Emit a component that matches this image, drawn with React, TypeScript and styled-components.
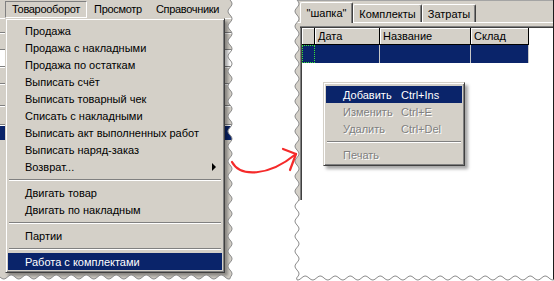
import React from 'react';
import styled, { createGlobalStyle } from 'styled-components';

const GRAY = '#d4d0c8';
const NAVY = '#0a246a';
const DARK = '#808080';
const DARKER = '#404040';
const EDGE = '#8c8c8c';
const FONT = '"Liberation Sans", Arial, sans-serif';

// torn paper edges (Snagit style)
const TAU = Math.PI * 2;
const wave = (t: number, base: number) => base + 2 * Math.sin((t * TAU) / 15);

const LEFT_W = 236;
const LEFT_TEAR_X = 230;
const LEFT_TEAR_Y = 277;

const RIGHT_W = 260;
const RIGHT_TEAR_X = 3;
const RIGHT_TEAR_Y = 278;

const leftTear: string[] = [];
for (let y = 0; y <= LEFT_TEAR_Y; y++) leftTear.push(`${wave(y, LEFT_TEAR_X).toFixed(2)},${y}`);
for (let x = LEFT_TEAR_X; x >= 0; x--) leftTear.push(`${x},${wave(x, LEFT_TEAR_Y).toFixed(2)}`);

const rightTear: string[] = [];
for (let x = RIGHT_W; x >= RIGHT_TEAR_X; x--) rightTear.push(`${x},${wave(x, RIGHT_TEAR_Y).toFixed(2)}`);
for (let y = RIGHT_TEAR_Y; y >= 0; y--) rightTear.push(`${wave(y, RIGHT_TEAR_X).toFixed(2)},${y}`);

const LEFT_CLIP = `M0,0 L${leftTear.join(' L')} Z`;
const RIGHT_CLIP = `M${RIGHT_TEAR_X},0 L${RIGHT_W},0 L${rightTear.join(' L')} Z`;

type MenuEntry =
  | { kind: 'item'; label: string; shortcut?: string; active?: boolean; disabled?: boolean; sub?: boolean }
  | { kind: 'sep' };

const salesMenu: MenuEntry[] = [
  { kind: 'item', label: 'Продажа' },
  { kind: 'item', label: 'Продажа с накладными' },
  { kind: 'item', label: 'Продажа по остаткам' },
  { kind: 'item', label: 'Выписать счёт' },
  { kind: 'item', label: 'Выписать товарный чек' },
  { kind: 'item', label: 'Списать с накладными' },
  { kind: 'item', label: 'Выписать акт выполненных работ' },
  { kind: 'item', label: 'Выписать наряд-заказ' },
  { kind: 'item', label: 'Возврат...', sub: true },
  { kind: 'sep' },
  { kind: 'item', label: 'Двигать товар' },
  { kind: 'item', label: 'Двигать по накладным' },
  { kind: 'sep' },
  { kind: 'item', label: 'Партии' },
  { kind: 'sep' },
  { kind: 'item', label: 'Работа с комплектами', active: true },
];

const gridMenu: MenuEntry[] = [
  { kind: 'item', label: 'Добавить', shortcut: 'Ctrl+Ins', active: true },
  { kind: 'item', label: 'Изменить', shortcut: 'Ctrl+E', disabled: true },
  { kind: 'item', label: 'Удалить', shortcut: 'Ctrl+Del', disabled: true },
  { kind: 'sep' },
  { kind: 'item', label: 'Печать', disabled: true },
];

const menuTitles = ['Товарооборот', 'Просмотр', 'Справочники'];

const tabs = [
  { label: '"шапка"', w: 53, current: true },
  { label: 'Комплекты', w: 69 },
  { label: 'Затраты', w: 54 },
];

const columns = [
  { title: '', w: 13 },
  { title: 'Дата', w: 65 },
  { title: 'Название', w: 91 },
  { title: 'Склад', w: 58 },
];

// what shows of the main window behind the dropdown
const bodyRows: { h: number; tone: 'bar' | 'field' | 'sel' }[] = [
  { h: 15, tone: 'bar' },
  { h: 17, tone: 'bar' },
  { h: 17, tone: 'field' },
  { h: 17, tone: 'bar' },
  { h: 22, tone: 'bar' },
  { h: 19, tone: 'bar' },
  { h: 15, tone: 'sel' },
];

const GlobalStyle = createGlobalStyle`
  html, body {
    margin: 0;
    padding: 0;
    background: #fff;
  }
  body {
    font-family: ${FONT};
  }
`;

const Canvas = styled.div`
  position: relative;
  display: flex;
  width: 554px;
  height: 281px;
  overflow: hidden;
  background: #fff;
  font-family: ${FONT};
  font-size: 11px;
  color: #000;
`;

const Sheet = styled.div<{ $w: number }>`
  position: relative;
  flex: none;
  width: ${({ $w }) => $w}px;
  height: 281px;

  & + & {
    margin-left: auto;
  }
`;

const LeftWindow = styled.div`
  position: relative;
  display: flex;
  flex-direction: column;
  height: 100%;
  background: ${GRAY};
  clip-path: path('${LEFT_CLIP}');
`;

const RightWindow = styled.div`
  position: relative;
  display: flex;
  flex-direction: column;
  height: 100%;
  background: #fff;
  border-right: 1px solid #1c1c1c;
  box-sizing: border-box;
  clip-path: path('${RIGHT_CLIP}');
`;

const TearLine = styled.svg`
  position: absolute;
  inset: 0;
  width: 100%;
  height: 100%;
  pointer-events: none;
  overflow: visible;
`;

const MenuBar = styled.div`
  display: flex;
  align-items: flex-start;
  height: 18px;
  padding: 1px 0 0 5px;
  box-sizing: border-box;
  background: ${GRAY};
`;

const MenuTitle = styled.div<{ $open?: boolean }>`
  height: 17px;
  line-height: 15px;
  padding: 0 6px;
  border: 1px solid transparent;
  box-sizing: border-box;
  white-space: nowrap;
  letter-spacing: -0.3px;
  ${({ $open }) => ($open ? `border-color: ${DARK} #fff #fff ${DARK};` : '')}
`;

const AppBody = styled.div`
  display: flex;
  flex-direction: column;
  flex: 1;
`;

const BodyRow = styled.div<{ $h: number; $tone: 'bar' | 'field' | 'sel' }>`
  height: ${({ $h }) => $h}px;
  box-sizing: border-box;
  border-bottom: 1px solid ${({ $tone }) => ($tone === 'sel' ? NAVY : DARK)};
  background: ${({ $tone }) => ($tone === 'sel' ? NAVY : $tone === 'field' ? '#fff' : GRAY)};
  box-shadow: inset 0 1px #fff;
`;

const PopupMenu = styled.div<{ $x: number; $y: number; $w: number }>`
  position: absolute;
  left: ${({ $x }) => $x}px;
  top: ${({ $y }) => $y}px;
  width: ${({ $w }) => $w}px;
  padding: 3px 2px 2px 2px;
  box-sizing: border-box;
  background: ${GRAY};
  border: 1px solid;
  border-color: ${GRAY} ${DARKER} ${DARKER} ${GRAY};
  box-shadow: inset 1px 1px #fff, inset -1px -1px ${DARK}, 3px 3px 3px rgba(0, 0, 0, 0.35);
  z-index: 2;
`;

const MenuItem = styled.div<{ $active?: boolean; $disabled?: boolean }>`
  display: flex;
  align-items: center;
  height: 17px;
  padding-left: 17px;
  white-space: nowrap;
  background: ${({ $active }) => ($active ? NAVY : 'transparent')};
  color: ${({ $active, $disabled }) => ($active ? '#fff' : $disabled ? DARK : '#000')};
  text-shadow: ${({ $disabled }) => ($disabled ? '1px 1px 0 #fff' : 'none')};
`;

const ItemLabel = styled.span<{ $w?: number }>`
  display: inline-block;
  width: ${({ $w }) => ($w ? `${$w}px` : 'auto')};
`;

const SubArrow = styled.span`
  margin-left: auto;
  margin-right: 6px;
  width: 0;
  height: 0;
  border-left: 4px solid #000;
  border-top: 4px solid transparent;
  border-bottom: 4px solid transparent;
`;

const MenuSep = styled.div`
  display: flex;
  align-items: center;
  height: 9px;

  &::after {
    content: '';
    flex: 1;
    margin: 0 1px;
    border-top: 1px solid ${DARK};
    border-bottom: 1px solid #fff;
  }
`;

const TabStrip = styled.div`
  display: flex;
  align-items: flex-end;
  height: 22px;
  padding-left: 6px;
  box-sizing: border-box;
  background: ${GRAY};
  border-top: 1px solid #a4a4a4;
  position: relative;
  z-index: 1;
`;

const Tab = styled.div<{ $w: number; $current?: boolean }>`
  width: ${({ $w }) => $w}px;
  height: ${({ $current }) => ($current ? 21 : 18)}px;
  margin-bottom: ${({ $current }) => ($current ? -1 : 0)}px;
  padding-top: ${({ $current }) => ($current ? 4 : 3)}px;
  box-sizing: border-box;
  text-align: center;
  line-height: 13px;
  background: ${GRAY};
  border-top: 1px solid #fff;
  border-left: 1px solid #fff;
  border-right: 1px solid ${DARKER};
  border-radius: 2px 2px 0 0;
  box-shadow: inset -1px 0 ${DARK};
  white-space: nowrap;
`;

const TabPage = styled.div`
  flex: 1;
  border-top: 1px solid #fff;
  padding-top: 3px;
  background:
    linear-gradient(${GRAY}, ${GRAY}) 0 0 / 100% 3px no-repeat,
    linear-gradient(${GRAY}, ${GRAY}) 0 0 / 6px 178px no-repeat,
    #fff;
`;

const Grid = styled.div`
  margin-left: 6px;
  padding: 2px 0 0 2px;
  background:
    linear-gradient(to bottom, ${DARK} 0 1px, ${DARKER} 1px 2px, transparent 2px) 0 0 / 100% 2px no-repeat,
    linear-gradient(to right, ${DARK} 0 1px, ${DARKER} 1px 2px, transparent 2px) 0 0 / 2px 174px no-repeat,
    #fff;
  height: 100%;
  box-sizing: border-box;
`;

const GridRow = styled.div`
  display: flex;
`;

const HeadCell = styled.div<{ $w: number }>`
  width: ${({ $w }) => $w}px;
  height: 17px;
  padding-left: 3px;
  box-sizing: border-box;
  line-height: 16px;
  background: ${GRAY};
  border-right: 1px solid #000;
  border-bottom: 1px solid #000;
  box-shadow: inset 1px 1px #fff;
  white-space: nowrap;
`;

const DataCell = styled.div<{ $w: number; $focus?: boolean }>`
  width: ${({ $w }) => $w}px;
  height: 18px;
  box-sizing: border-box;
  background: ${NAVY};
  border-right: 1px solid #c8c8c8;
  ${({ $focus }) => ($focus ? 'border: 1px dotted #37e637;' : '')}
`;

const Arrow = styled.svg`
  position: absolute;
  left: 228px;
  top: 145px;
  width: 75px;
  height: 32px;
  overflow: visible;
  pointer-events: none;
`;

function Popup({ x, y, w, entries, labelW }: { x: number; y: number; w: number; entries: MenuEntry[]; labelW?: number }) {
  return (
    <PopupMenu $x={x} $y={y} $w={w}>
      {entries.map((e, i) =>
        e.kind === 'sep' ? (
          <MenuSep key={i} />
        ) : (
          <MenuItem key={i} $active={e.active} $disabled={e.disabled}>
            <ItemLabel $w={labelW}>{e.label}</ItemLabel>
            {e.shortcut && <span>{e.shortcut}</span>}
            {e.sub && <SubArrow />}
          </MenuItem>
        ),
      )}
    </PopupMenu>
  );
}

export default function App() {
  return (
    <Canvas>
      <GlobalStyle />

      <Sheet $w={LEFT_W}>
        <LeftWindow>
          <MenuBar>
            {menuTitles.map((t, i) => (
              <MenuTitle key={t} $open={i === 0}>
                {t}
              </MenuTitle>
            ))}
          </MenuBar>
          <AppBody>
            {bodyRows.map((r, i) => (
              <BodyRow key={i} $h={r.h} $tone={r.tone} />
            ))}
          </AppBody>
          <Popup x={5} y={18} w={220} entries={salesMenu} />
        </LeftWindow>
        <TearLine>
          <polyline points={leftTear.join(' ')} fill="none" stroke={EDGE} strokeWidth={1} />
        </TearLine>
      </Sheet>

      <Sheet $w={RIGHT_W}>
        <RightWindow>
          <TabStrip>
            {tabs.map((t) => (
              <Tab key={t.label} $w={t.w} $current={t.current}>
                {t.label}
              </Tab>
            ))}
          </TabStrip>
          <TabPage>
            <Grid>
              <GridRow>
                {columns.map((c, i) => (
                  <HeadCell key={i} $w={c.w}>
                    {c.title}
                  </HeadCell>
                ))}
              </GridRow>
              <GridRow>
                {columns.map((c, i) => (
                  <DataCell key={i} $w={c.w} $focus={i === 0} />
                ))}
              </GridRow>
            </Grid>
          </TabPage>
          <Popup x={29} y={82} w={142} entries={gridMenu} labelW={58} />
        </RightWindow>
        <TearLine>
          <polyline points={rightTear.join(' ')} fill="none" stroke={EDGE} strokeWidth={1} />
        </TearLine>
      </Sheet>

      <Arrow viewBox="0 0 75 32">
        <path d="M4,17 C12,32 40,32 68,9" fill="none" stroke="#f52a2a" strokeWidth={2.2} strokeLinecap="round" />
        <path d="M55,4 L68,9 L62,25" fill="none" stroke="#f52a2a" strokeWidth={2.2} strokeLinecap="round" strokeLinejoin="round" />
      </Arrow>
    </Canvas>
  );
}
